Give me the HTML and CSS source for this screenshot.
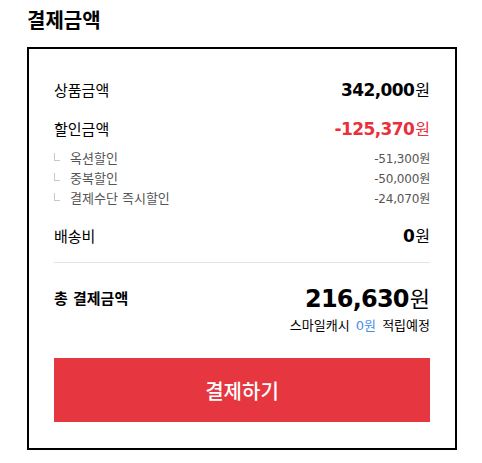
FILE: index.html
```html
<!DOCTYPE html>
<html lang="ko">

<head>
      <meta charset="UTF-8">
      <meta name="viewport" content="width=device-width, initial-scale=1.0">
      <title>결제금액</title>
      <link rel="stylesheet" href="styles.css">
</head>

<body>
      <div class="pay-wrapper">
            <h1 class="pay-title">결제금액</h1>

            <div class="pay-box">
                  <div class="row">
                        <span class="label">상품금액</span>
                        <span class="price"><b>342,000</b>원</span>
                  </div>
                  <div class="row sale">
                        <span class="label">할인금액</span>
                        <span class="price red"><b>-125,370</b>원</span>
                  </div>

                  <ul class="sub-list">
                        <li><span class="sub-label">옥션할인</span><span class="sub-price">-51,300원</span></li>
                        <li><span class="sub-label">중복할인</span><span class="sub-price">-50,000원</span></li>
                        <li><span class="sub-label">결제수단 즉시할인</span><span class="sub-price">-24,070원</span></li>
                  </ul>

                  <div class="row ship">
                        <span class="label">배송비</span>
                        <span class="price"><b>0</b>원</span>
                  </div>

                  <hr class="line">

                  <div class="row total">
                        <span class="label bold">총 결제금액</span>
                        <span class="total-price"><b>216,630</b>원</span>
                  </div>
                  <p class="cash">스마일캐시 <span class="blue">0원</span> 적립예정</p>

                  <button class="pay-btn">결제하기</button>
            </div>
      </div>
</body>

</html>
```

FILE: styles.css
```css
* {
      padding: 0;
      margin: 0;
      box-sizing: border-box;
      font-family: "DejaVu Sans", "Noto Sans CJK KR", sans-serif;
}

body {
      background-color: #fff;
      color: #000;
}

.pay-wrapper {
      padding-left: 27px;
}

.pay-title {
      font-family: "Noto Sans CJK KR", sans-serif;
      font-size: 20px;
      font-weight: 700;
      line-height: 28px;
      padding-top: 6px;
      margin-bottom: 13px;
}

.pay-box {
      width: 430px;
      border: 2px solid #000;
      padding: 20px 25px 26px;
}

.row {
      display: flex;
      justify-content: space-between;
      align-items: center;
      height: 40px;
}

.row.sale {
      height: 38px;
}

.label {
      font-size: 15px;
}

.label.bold {
      font-weight: 700;
}

.price {
      font-size: 16px;
}

.price b {
      font-size: 17px;
      letter-spacing: -0.6px;
      margin-right: 1px;
}

.red {
      color: #e8313c;
}

.sub-list {
      list-style: none;
}

.sub-list li {
      display: flex;
      justify-content: space-between;
      align-items: center;
      height: 20px;
      font-size: 13px;
      color: #555;
}

.sub-label {
      position: relative;
      padding-left: 16px;
}

.sub-label::before {
      content: "";
      position: absolute;
      left: 0;
      top: 5px;
      width: 5px;
      height: 7px;
      border-left: 1px solid #c8c8c8;
      border-bottom: 1px solid #c8c8c8;
}

.sub-price {
      font-size: 12px;
      letter-spacing: -0.2px;
}

.ship {
      margin-top: 8px;
}

.line {
      border: none;
      border-top: 1px solid #e5e5e5;
      margin-top: 7px;
}

.total {
      margin-top: 17px;
      height: 34px;
}

.total-price {
      font-size: 22px;
}

.total-price b {
      font-size: 24px;
      letter-spacing: -0.8px;
      margin-right: 1px;
}

.cash {
      text-align: right;
      font-size: 13px;
      line-height: 18px;
      word-spacing: 2px;
      margin-top: 3px;
}

.blue {
      color: #4a8fe8;
}

.pay-btn {
      display: block;
      width: 100%;
      height: 64px;
      margin-top: 23px;
      border: none;
      background-color: #e63740;
      color: #fff;
      font-family: "Noto Sans CJK KR", sans-serif;
      font-size: 20px;
      font-weight: 500;
}
```
